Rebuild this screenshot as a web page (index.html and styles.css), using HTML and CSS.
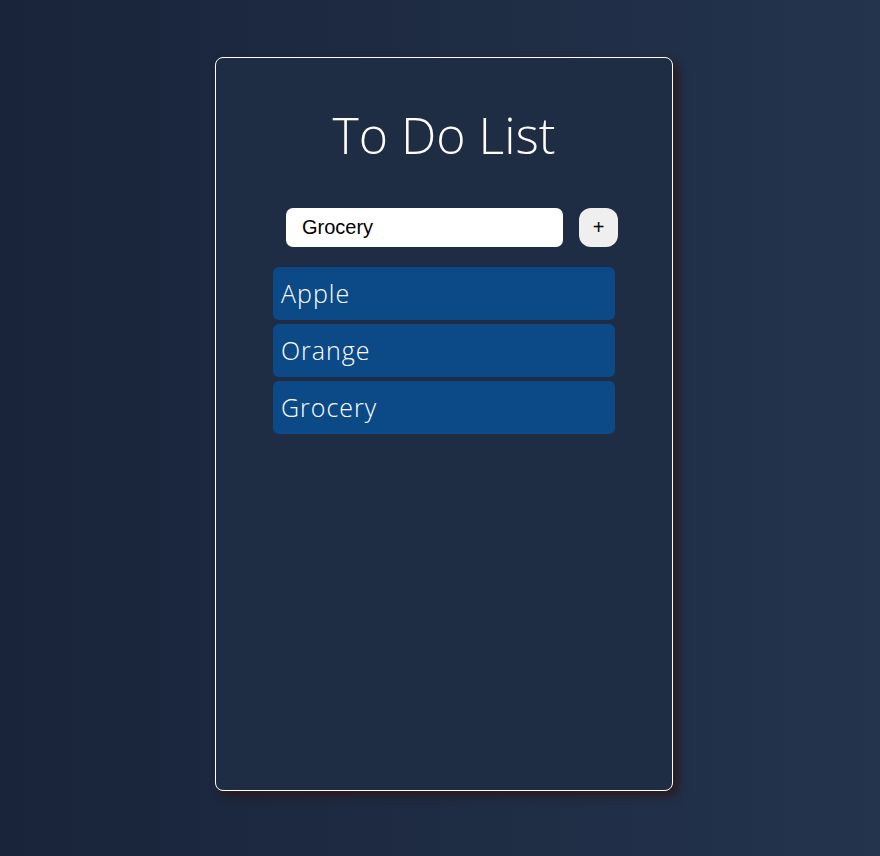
FILE: index.html
```html
<!DOCTYPE html>
<html lang="en">
<head>
    <meta charset="UTF-8">
    <meta name="viewport" content="width=device-width, initial-scale=1.0">
    <title>To Do List</title>
    <link rel="stylesheet" href="styles.css">
</head>
<body>
    <div class="card">
        <h1>To Do List</h1>
        <form class="add-form" id="addForm">
            <input type="text" id="taskInput" value="Grocery">
            <button type="submit" class="add-btn">+</button>
        </form>
        <ul class="list" id="list">
            <li>Apple</li>
            <li>Orange</li>
            <li>Grocery</li>
        </ul>
    </div>

    <script>
        document.getElementById('addForm').addEventListener('submit', function (event) {
            event.preventDefault();
            const input = document.getElementById('taskInput');
            if (input.value.trim() === '') return;
            const item = document.createElement('li');
            item.textContent = input.value;
            document.getElementById('list').appendChild(item);
        });
    </script>
</body>
</html>
```

FILE: styles.css
```css
html, body {
    height: 100%;
}
body {
    margin: 0;
    background: linear-gradient(to right, #19243a, #1f2d45 60%, #23344c);
    font-family: "Open Sans", Arial, sans-serif;
}
.card {
    box-sizing: border-box;
    width: 458px;
    height: 734px;
    margin: 57px 0 0 215px;
    padding-top: 44px;
    border: 1px solid #fff;
    border-radius: 8px;
    background-color: #1e2c44;
    box-shadow: 5px 5px 10px rgba(45, 22, 22, 0.85);
}
h1 {
    margin: 0;
    text-align: center;
    color: #fff;
    font-weight: 300;
    font-size: 50px;
    line-height: 66px;
}
.add-form {
    display: flex;
    gap: 16px;
    margin: 40px 0 0 70px;
}
.add-form input {
    box-sizing: border-box;
    width: 277px;
    height: 39px;
    padding: 0 16px;
    border: none;
    border-radius: 7px;
    font-family: Arial, "Liberation Sans", sans-serif;
    font-size: 20px;
    color: #000;
}
.add-btn {
    width: 39px;
    height: 39px;
    padding: 0;
    border: none;
    border-radius: 12px;
    background-color: #efefef;
    font-family: Arial, "Liberation Sans", sans-serif;
    font-size: 20px;
    cursor: pointer;
}
.list {
    list-style: none;
    width: 342px;
    margin: 20px 0 0 57px;
    padding: 0;
}
.list li {
    height: 53px;
    margin-bottom: 4px;
    padding-left: 8px;
    border-radius: 6px;
    background-color: #0b4a87;
    color: #fff;
    font-weight: 300;
    font-size: 25px;
    letter-spacing: 1px;
    line-height: 52px;
}
```
